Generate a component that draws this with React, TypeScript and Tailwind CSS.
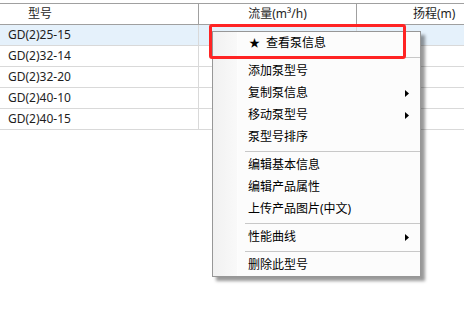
import React from 'react';

const rows = ['GD(2)25-15', 'GD(2)32-14', 'GD(2)32-20', 'GD(2)40-10', 'GD(2)40-15'];

type MenuEntry = { label: string; star?: boolean; sub?: boolean } | 'sep';

const menu: MenuEntry[] = [
  { label: '查看泵信息', star: true },
  'sep',
  { label: '添加泵型号' },
  { label: '复制泵信息', sub: true },
  { label: '移动泵型号', sub: true },
  { label: '泵型号排序' },
  'sep',
  { label: '编辑基本信息' },
  { label: '编辑产品属性' },
  { label: '上传产品图片(中文)' },
  'sep',
  { label: '性能曲线', sub: true },
  'sep',
  { label: '删除此型号' },
];

function Arrow() {
  return (
    <svg width="4" height="7" viewBox="0 0 4 7" className="mr-[11px]">
      <path d="M0 0 L4 3.5 L0 7 Z" fill="#000" />
    </svg>
  );
}

export default function App() {
  return (
    <div
      className="relative w-[464px] h-[316px] bg-white overflow-hidden text-[12px] text-[#1e1e1e]"
      style={{ fontFamily: '"Noto Sans", "Noto Sans CJK SC", sans-serif' }}
    >
      {/* Grid */}
      <div className="mt-[3px] border-t border-[#a0a0a0]">
        {/* Header */}
        <div className="flex h-[21px] border-b border-[#a0a0a0] leading-[20px]">
          <div className="w-[199px] border-r border-[#a0a0a0] pl-[28px]">型号</div>
          <div className="w-[158px] border-r border-[#a0a0a0] text-center">流量(m³/h)</div>
          <div className="flex-1 pl-[56px]">扬程(m)</div>
        </div>
        {rows.map((r, i) => (
          <div
            key={r}
            className={`flex h-[21px] border-b border-[#d9d9d9] leading-[20px] ${i === 0 ? 'bg-[#e5f1fb]' : 'bg-white'}`}
          >
            <div className="w-[199px] border-r border-[#d9d9d9] pl-[8px]">{r}</div>
            <div className="w-[158px] border-r border-[#d9d9d9]" />
            <div className="flex-1" />
          </div>
        ))}
      </div>

      {/* Context menu */}
      <div className="absolute left-[212px] top-[31px] w-[209px] flex border border-[#979797] bg-[#fcfcfc] shadow-[4px_4px_3px_rgba(0,0,0,0.4)] text-black">
        <div className="w-[25px] bg-gradient-to-r from-[#f1f1f1] to-[#f9f9f9] border-r border-[#fdfdfd]" />
        <div className="flex-1">
          {menu.map((m, i) =>
            m === 'sep' ? (
              <div key={i} className="h-[6px] flex items-center pl-[7px]">
                <div className="h-px w-full bg-[#c8c8c8]" />
              </div>
            ) : (
              <div key={i} className="h-[22px] flex items-center justify-between pl-[10px]">
                <span className="flex items-center">
                  {m.star && <span className="w-[18px] text-[11px] pl-px">★</span>}
                  {m.label}
                </span>
                {m.sub && <Arrow />}
              </div>
            )
          )}
        </div>
      </div>

      {/* Highlight box */}
      <div className="absolute left-[209px] top-[24px] w-[197px] h-[35px] border-[3px] border-[#ff2424] rounded-[3px]" />
    </div>
  );
}
